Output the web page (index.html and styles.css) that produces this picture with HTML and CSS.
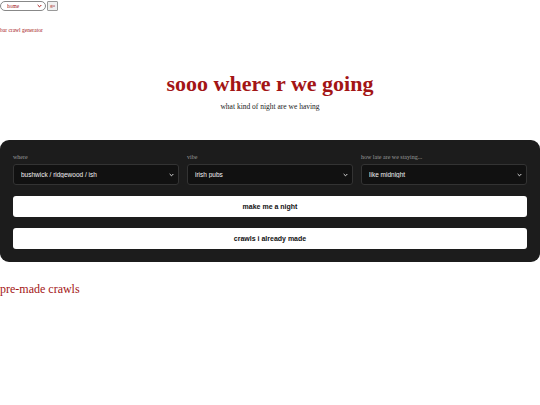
FILE: index.html
```html
<!DOCTYPE html>
<html>
<head>
<meta charset="utf-8">
<link rel="stylesheet" href="styles.css">
</head>
<body>
<nav class="topnav">
  <select class="nav-select"><option>home</option></select>
  <button class="nav-go">go</button>
</nav>
<div class="brand">bar crawl generator</div>
<header class="hero">
  <h1 class="hero-title">sooo where r we going</h1>
  <p class="hero-sub">what kind of night are we having</p>
</header>
<section class="panel">
  <div class="fields">
    <label class="field">
      <span class="field-label">where</span>
      <select class="field-select"><option>bushwick / ridgewood / ish</option></select>
    </label>
    <label class="field">
      <span class="field-label">vibe</span>
      <select class="field-select"><option>irish pubs</option></select>
    </label>
    <label class="field">
      <span class="field-label">how late are we staying...</span>
      <select class="field-select"><option>like midnight</option></select>
    </label>
  </div>
  <button class="btn">make me a night</button>
  <button class="btn">crawls i already made</button>
</section>
<h2 class="section-title">pre-made crawls</h2>
</body>
</html>
```
FILE: styles.css
```css
html, body {
  margin: 0;
  padding: 0;
  background: #ffffff;
  font-family: "Liberation Serif", "Times New Roman", serif;
}
.topnav {
  display: flex;
  align-items: center;
  gap: 1px;
  height: 11px;
}
.nav-select {
  -webkit-appearance: none;
  appearance: none;
  box-sizing: border-box;
  width: 46px;
  height: 10px;
  font-family: "Liberation Serif", serif;
  font-size: 5.5px;
  line-height: 8px;
  color: #a31515;
  border: 1px solid #888;
  border-radius: 5px;
  background: #fff url("data:image/svg+xml,%3Csvg xmlns='http://www.w3.org/2000/svg' width='6' height='4' viewBox='0 0 6 4'%3E%3Cpath d='M0.8 0.8 L3 3 L5.2 0.8' fill='none' stroke='%23a31515' stroke-width='1.2'/%3E%3C/svg%3E") no-repeat right 3px center / 5px 4px;
  padding: 0 0 0 6px;
  margin: 0;
}
.nav-go {
  box-sizing: border-box;
  height: 10px;
  width: 11px;
  font-family: "Liberation Serif", serif;
  font-size: 5px;
  color: #a31515;
  border: 1px solid #999;
  border-radius: 1px;
  background: #f0f0f0;
  padding: 0;
  margin: 0;
}
.brand {
  margin-top: 16px;
  font-size: 5.5px;
  line-height: 7px;
  color: #a31515;
}
.hero {
  text-align: center;
  margin-top: 37px;
}
.hero-title {
  margin: 0;
  font-size: 22px;
  line-height: 26px;
  font-weight: bold;
  color: #a31515;
}
.hero-sub {
  margin: 5px 0 0;
  font-size: 7.5px;
  line-height: 10px;
  color: #1a1a1a;
}
.panel {
  margin-top: 28px;
  background: #1c1c1c;
  border-radius: 9px;
  padding: 13px;
  display: flex;
  flex-direction: column;
  gap: 11px;
}
.fields {
  display: grid;
  grid-template-columns: 1fr 1fr 1fr;
  gap: 8px;
}
.field {
  display: flex;
  flex-direction: column;
  gap: 3px;
}
.field-label {
  font-size: 6px;
  color: #9a9a9a;
  line-height: 8px;
}
.field-select {
  -webkit-appearance: none;
  appearance: none;
  box-sizing: border-box;
  height: 21px;
  background: #111111 url("data:image/svg+xml,%3Csvg xmlns='http://www.w3.org/2000/svg' width='6' height='4' viewBox='0 0 6 4'%3E%3Cpath d='M0.8 0.8 L3 3 L5.2 0.8' fill='none' stroke='%23dddddd' stroke-width='1.2'/%3E%3C/svg%3E") no-repeat right 4px center / 5px 4px;
  color: #f2f2f2;
  border: 1px solid #333;
  border-radius: 3px;
  font-family: "Liberation Sans", Arial, sans-serif;
  font-size: 6.5px;
  padding: 0 12px 0 7px;
  margin: 0;
}
.btn {
  height: 21px;
  background: #ffffff;
  border: none;
  border-radius: 3px;
  font-family: "Liberation Sans", Arial, sans-serif;
  font-size: 7px;
  font-weight: bold;
  color: #111;
  margin: 0;
}
.section-title {
  margin: 19px 0 0;
  font-size: 12px;
  line-height: 16px;
  font-weight: normal;
  color: #a31515;
}
```
